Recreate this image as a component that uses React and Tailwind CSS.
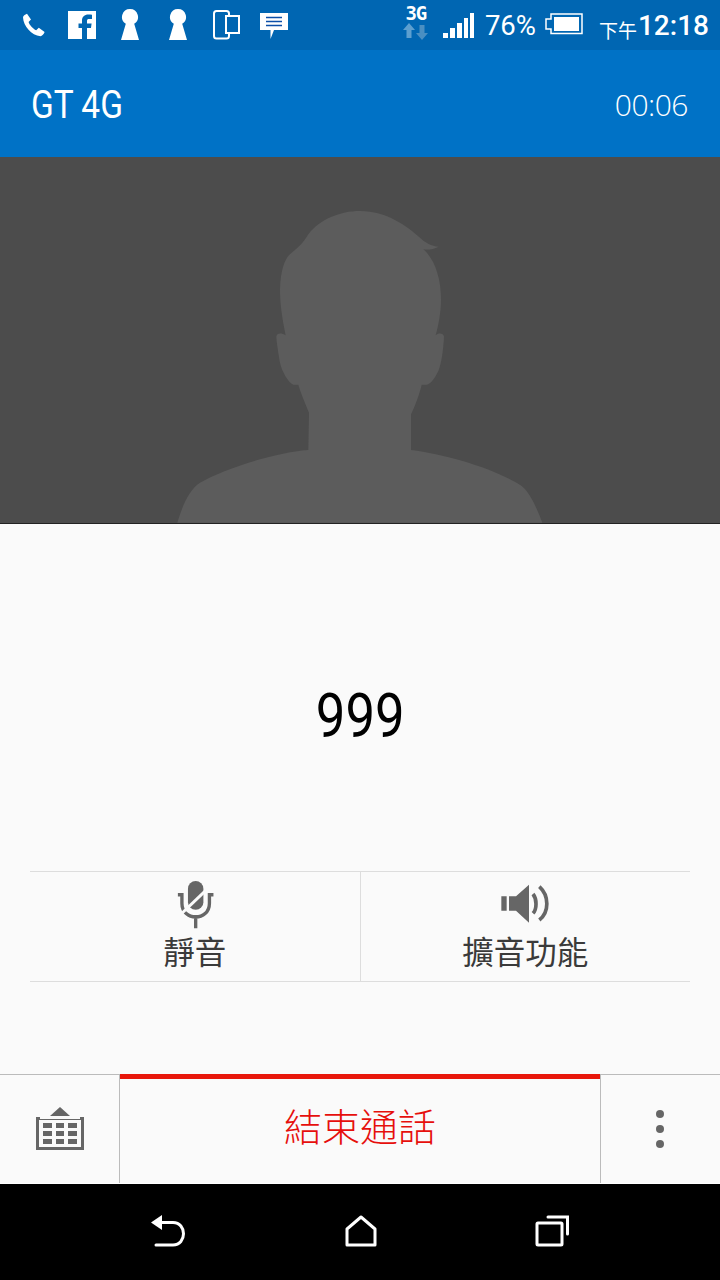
import React from "react";

const CJK = "font-['Noto_Sans_CJK_TC','Noto_Sans_CJK_SC',sans-serif]";

function PhoneIcon() {
  return (
    <svg width="24" height="24" viewBox="0 0 24 24" className="ml-[22px] shrink-0">
      <path
        fill="#fff"
        d="M1 4.500 C1 3 3 1.500 5 .8 L9 6.500 L6.600 9 C7.500 12 11 16 14.200 17.200 L16.800 14.800 L22.600 19 C22 21 20 23 18.500 23.200 C9.500 22.500 1.500 13 1 4.500 Z"
      />
    </svg>
  );
}

function FacebookIcon() {
  return (
    <svg width="28" height="28" viewBox="0 0 28 28" className="ml-[22px] shrink-0">
      <path
        fill="#fff"
        d="M0 0 H28 V28 H19 V17 H23 L23.600 12.500 H19 V10 C19 8.600 19.600 8 21 8 H24 V3.800 C22.800 3.600 21.600 3.600 20.400 3.600 C16.400 3.600 14 6 14 9.600 V12.500 H10.500 V17 H14 V28 H0 Z"
      />
    </svg>
  );
}

function KeyholeIcon({ className }) {
  return (
    <svg width="18" height="32" viewBox="0 0 18 32" className={className}>
      <path fill="#fff" d="M9 0 A8 8 0 0 1 13.200 14.800 L18 31 H0 L4.800 14.800 A8 8 0 0 1 9 0 Z" />
    </svg>
  );
}

function DevicesIcon() {
  return (
    <svg width="27" height="30" viewBox="0 0 27 30" className="ml-[26px] shrink-0">
      <rect x="1" y="1" width="15" height="27.500" rx="2.500" fill="none" stroke="#fff" strokeWidth="2" />
      <rect x="13" y="6" width="13" height="17" fill="#0066b2" stroke="#fff" strokeWidth="2" />
    </svg>
  );
}

function MessageIcon() {
  return (
    <svg width="28" height="27" viewBox="0 0 28 27" className="ml-[20px] shrink-0 mt-[2px]">
      <path fill="#fff" d="M0 0 H28 V17 H14 L10.500 26 V17 H0 Z" />
      <path stroke="#0d4fa8" strokeWidth="1.600" d="M6 4.500 H22 M6 8.500 H22 M6 12.500 H22" />
    </svg>
  );
}

function DataBadge() {
  return (
    <div className="flex flex-col items-center w-[26px] shrink-0 mt-[-6px]">
      <span className="font-['DejaVu_Sans_Mono',monospace] font-bold text-[19px] leading-[16px] tracking-[-1px] text-white">
        3G
      </span>
      <svg width="25" height="17" viewBox="0 0 25 17" className="mt-[2px]">
        <path fill="#5d9fcf" d="M6 0 L12 7 H8.500 V15 H3.500 V7 H0 Z" />
        <path fill="#4a8fc2" d="M19 17 L25 10 H21.500 V2 H16.500 V10 H13 Z" />
      </svg>
    </div>
  );
}

function SignalIcon() {
  return (
    <svg width="32" height="26" viewBox="0 0 32 26" className="ml-[13px] shrink-0 mt-[2px]">
      <path
        fill="#fff"
        d="M1 20 H6 V25 H1 Z M8 15 H13 V25 H8 Z M15 10 H20 V25 H15 Z M22 5 H26 V25 H22 Z M28 0 H32 V25 H28 Z"
      />
    </svg>
  );
}

function BatteryIcon() {
  return (
    <svg width="38" height="22" viewBox="0 0 38 22" className="ml-[9px] shrink-0 mt-[-2px]">
      <path fill="none" stroke="#fff" strokeWidth="1.500" d="M6 1 H37 V20.500 H6 V16 H1 V6 H6 Z" />
      <rect x="9" y="4" width="25" height="14" fill="#fff" />
    </svg>
  );
}

function StatusBar() {
  return (
    <div className="h-[50px] bg-[#0066b2] flex items-center shrink-0 text-white">
      <PhoneIcon />
      <FacebookIcon />
      <KeyholeIcon className="ml-[25px] shrink-0" />
      <KeyholeIcon className="ml-[30px] shrink-0" />
      <DevicesIcon />
      <MessageIcon />
      <div className="ml-auto flex items-center pr-[11px]">
        <DataBadge />
        <SignalIcon />
        <span className="ml-[11px] font-['Roboto',sans-serif] text-[27.500px] leading-none mt-[2px]">76%</span>
        <BatteryIcon />
        <span className={`ml-[16px] text-[19px] leading-none mt-[8px] ${CJK}`}>下午</span>
        <span className="ml-[1px] font-['Roboto',sans-serif] font-medium text-[28px] leading-none mt-[2px]">12:18</span>
      </div>
    </div>
  );
}

function TitleBar() {
  return (
    <div className="h-[107px] bg-[#0072c6] flex items-center justify-between pl-[31px] pr-[32px] pt-[3px] shrink-0 text-white">
      <span className="font-['Roboto',sans-serif] text-[38px] leading-none origin-left scale-x-[0.88] inline-block">
        GT 4G
      </span>
      <span className="font-['Open_Sans',sans-serif] font-light text-[30px] leading-none tracking-[-0.5px] text-white">
        00:06
      </span>
    </div>
  );
}

function ContactPhoto() {
  return (
    <div className="h-[367px] bg-[#4c4c4c] border-b border-[#222] flex items-end justify-center shrink-0">
      <svg width="400" height="312" viewBox="0 35 1200 936" className="block">
        <path
          fill="#5c5c5c"
          d="M52 970 C70 910 90 870 120 850 C190 810 340 760 445 752 L447 640 C435 610 420 575 415 556 L400 556 C385 550 365 515 360 490 C355 460 350 430 349 412 C350 400 365 400 377 408 C365 350 360 310 360 270 C362 210 375 175 395 160 C415 145 430 130 445 105 C480 60 540 35 600 35 C680 35 740 80 780 115 C795 130 815 140 836 142 C820 150 805 152 790 150 C820 175 843 230 843 300 C843 340 835 380 827 408 C835 400 850 400 852 412 C850 450 845 490 835 515 C825 535 812 555 800 556 L785 556 C780 580 765 620 753 645 L753 752 C860 765 1010 810 1085 860 C1110 880 1130 925 1147 970 Z"
        />
      </svg>
    </div>
  );
}

function MuteIcon() {
  return (
    <svg width="44" height="52" viewBox="130 40 130 155" className="block">
      <path fill="#666" d="M174 72 A23 23 0 0 1 220 72 V112 A23 23 0 0 1 174 112 Z" />
      <path
        fill="none"
        stroke="#666"
        strokeWidth="10"
        d="M144 90 H156 V115 C156 170 238 170 238 115 V90 H250 M197 150 V190"
      />
      <path stroke="#fafafa" strokeWidth="9" d="M243 62 L156 145" />
    </svg>
  );
}

function SpeakerIcon() {
  return (
    <svg width="50" height="44" viewBox="1110 55 150 130" className="block">
      <path fill="#666" d="M1114 97 H1130 V140 H1114 Z M1137 97 H1158 L1197 62 V176 L1158 140 H1137 Z" />
      <path
        fill="none"
        stroke="#666"
        strokeWidth="11"
        d="M1209 90 C1221 105 1221 135 1209 148 M1228 68 C1258 95 1258 145 1228 168"
      />
    </svg>
  );
}

function CallAction({ icon, label, divider }) {
  return (
    <div className={`flex-1 flex flex-col items-center pt-[6px] ${divider ? "border-r border-[#ddd]" : ""}`}>
      <div className="h-[52px] flex items-center justify-center">{icon}</div>
      <span className={`text-[31.500px] leading-[44px] -mt-[2px] text-[#3a3a3a] font-normal ${CJK}`}>{label}</span>
    </div>
  );
}

function KeypadIcon() {
  return (
    <svg width="48" height="43" viewBox="0 0 48 43" className="block">
      <path fill="#666" d="M24 0 L34 9 H14 Z" />
      <path fill="#666" d="M0 10 H4 V12 H44 V10 H48 V43 H0 Z" />
      <rect x="3" y="13" width="42" height="27" fill="#fafafa" />
      <path
        fill="#666"
        d="M7 16 H16 V21 H7 Z M20 16 H28 V21 H20 Z M32 16 H41 V21 H32 Z M7 24 H16 V29 H7 Z M20 24 H28 V29 H20 Z M32 24 H41 V29 H32 Z M7 32 H16 V37 H7 Z M20 32 H28 V37 H20 Z M32 32 H41 V37 H32 Z"
      />
    </svg>
  );
}

function BottomActions() {
  return (
    <div className="h-[110px] flex shrink-0 bg-[#fafafa] border-b border-white">
      <div className="w-[120px] border-t border-r border-[#bbb] flex items-center justify-center pb-[2px]">
        <KeypadIcon />
      </div>
      <div className="w-[480px] border-t-[5px] border-[#e8170b] flex items-center justify-center pb-[12px]">
        <span className={`text-[38px] leading-none text-[#e60f0c] font-light ${CJK}`}>結束通話</span>
      </div>
      <div className="flex-1 border-t border-l border-[#bbb] flex flex-col items-center justify-center gap-[7px] pr-[1px]">
        <span className="w-2 h-2 rounded-full bg-[#666]" />
        <span className="w-2 h-2 rounded-full bg-[#666]" />
        <span className="w-2 h-2 rounded-full bg-[#666]" />
      </div>
    </div>
  );
}

function NavBar() {
  return (
    <div className="h-[96px] shrink-0 bg-black flex items-center justify-center pb-[2px] gap-[158px]">
      <svg width="36" height="32" viewBox="0 0 36 32" className="block">
        <path fill="#fff" d="M0 7.500 L11 0 V15 Z" />
        <path fill="none" stroke="#fff" strokeWidth="3" strokeLinecap="round" d="M9 7.500 H22 C36 7.500 36 30 22 30 H5" />
      </svg>
      <svg width="32" height="32" viewBox="0 0 32 32" className="block">
        <path fill="none" stroke="#fff" strokeWidth="3" strokeLinejoin="round" d="M2 14 L16 2 L30 14 V30 H2 Z" />
      </svg>
      <svg width="35" height="32" viewBox="0 0 35 32" className="block">
        <rect x="2" y="8" width="25" height="22" rx="1" fill="none" stroke="#fff" strokeWidth="3" />
        <path fill="none" stroke="#fff" strokeWidth="3" strokeLinecap="round" d="M13 2 H32.500 V19" />
      </svg>
    </div>
  );
}

export default function App() {
  return (
    <div className="w-[720px] h-[1280px] flex flex-col overflow-hidden bg-[#fafafa]">
      <StatusBar />
      <TitleBar />
      <ContactPhoto />

      {/* Called number and in-call toggles */}
      <div className="flex-1 flex flex-col px-[30px]">
        <div className="flex-1 flex items-center justify-center pt-[36px]">
          <span className="font-['Roboto',sans-serif] text-[62px] leading-none text-black scale-x-[0.85] inline-block">
            999
          </span>
        </div>
        <div className="h-[111px] flex border-y border-[#ddd] mb-[92px]">
          <CallAction icon={<MuteIcon />} label="靜音" divider />
          <CallAction icon={<SpeakerIcon />} label="擴音功能" />
        </div>
      </div>

      <BottomActions />
      <NavBar />
    </div>
  );
}
